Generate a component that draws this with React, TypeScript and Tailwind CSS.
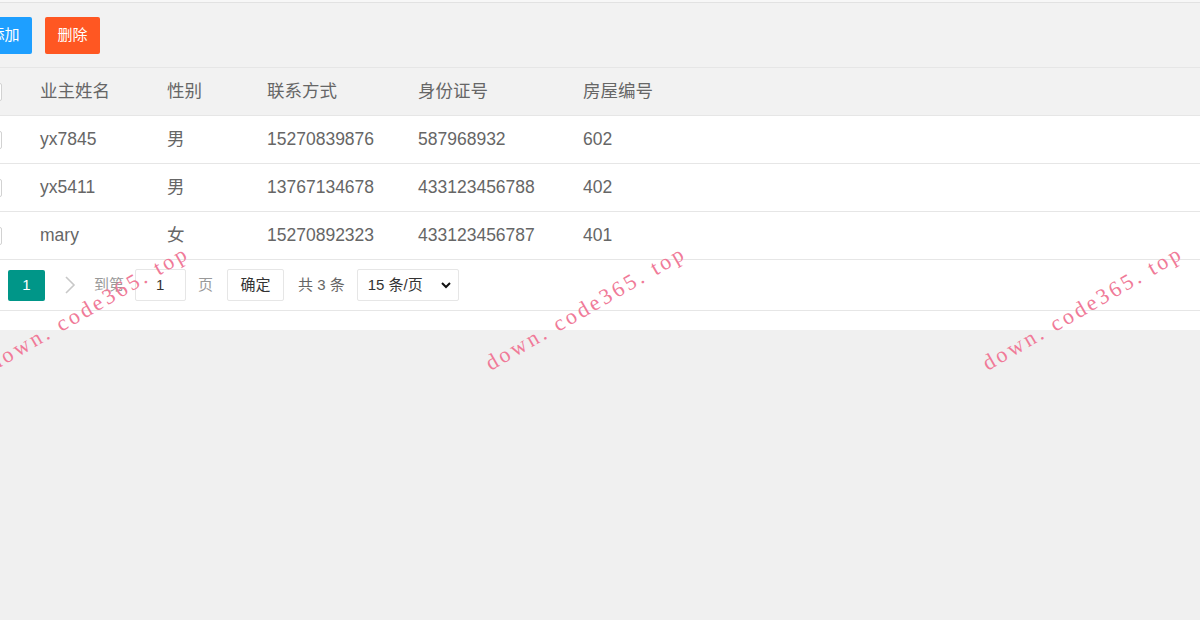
import React from "react";

interface Owner {
  name: string;
  gender: string;
  phone: string;
  idCard: string;
  house: string;
}

const owners: Owner[] = [
  { name: "yx7845", gender: "男", phone: "15270839876", idCard: "587968932", house: "602" },
  { name: "yx5411", gender: "男", phone: "13767134678", idCard: "433123456788", house: "402" },
  { name: "mary", gender: "女", phone: "15270892323", idCard: "433123456787", house: "401" },
];

const font = { fontFamily: '"Liberation Sans", "Noto Sans CJK SC", sans-serif' };

const Checkbox = () => (
  <div className="-ml-[17px] h-[18px] w-[19px] rounded-[2px] border border-[#d2d2d2] bg-white"></div>
);

const Row = ({ cells, head }: { cells: string[]; head?: boolean }) => (
  <div
    className={
      "flex h-[48px] items-center border-b border-[#e6e6e6] text-[17.5px] text-[#666] " +
      (head ? "bg-[#f2f2f2]" : "bg-white")
    }
  >
    <div className="w-[22px] shrink-0">
      <Checkbox />
    </div>
    <div className="w-[127px] shrink-0 pl-[18px]">{cells[0]}</div>
    <div className="w-[100px] shrink-0 pl-[18px]">{cells[1]}</div>
    <div className="w-[151px] shrink-0 pl-[18px]">{cells[2]}</div>
    <div className="w-[165px] shrink-0 pl-[18px]">{cells[3]}</div>
    <div className="flex-1 pl-[18px]">{cells[4]}</div>
  </div>
);

const Watermark = ({ left }: { left: number }) => (
  <div
    className="pointer-events-none absolute top-[348px] whitespace-nowrap text-[22px] tracking-[3px] text-[#f07a98]"
    style={{
      left,
      transform: "rotate(-30deg)",
      transformOrigin: "left center",
      fontFamily: '"Liberation Serif", serif',
    }}
  >
    down. code365. top
  </div>
);

export default function App() {
  return (
    <div className="relative h-[620px] w-[1200px] overflow-hidden bg-[#f0f0f0]" style={font}>
      <div className="h-[3px] border-b border-[#e2e2e2] bg-[#f7f7f7]"></div>

      <div className="bg-white pb-[19px]">
        {/* toolbar */}
        <div className="flex h-[64px] items-center gap-[13px] bg-[#f2f2f2]">
          <button className="-ml-[23px] h-[37px] w-[55px] rounded-[2px] bg-[#1e9fff] text-[15px] text-white">
            添加
          </button>
          <button className="h-[37px] w-[55px] rounded-[2px] bg-[#ff5722] text-[15px] text-white">
            删除
          </button>
        </div>

        <div className="border-t border-[#e6e6e6]">
          <Row head cells={["业主姓名", "性别", "联系方式", "身份证号", "房屋编号"]} />
          {owners.map((o) => (
            <Row key={o.name} cells={[o.name, o.gender, o.phone, o.idCard, o.house]} />
          ))}
        </div>

        {/* pagination */}
        <div className="flex h-[51px] items-center border-b border-[#e6e6e6] pl-[8px] text-[15px] text-[#666]">
          <div className="flex h-[31px] w-[37px] items-center justify-center rounded-[2px] bg-[#009688] text-white">
            1
          </div>
          <svg className="ml-[19px]" width="12" height="20" viewBox="0 0 12 20">
            <path d="M2 2 L10 10 L2 18" fill="none" stroke="#c8c8c8" strokeWidth="1.6" />
          </svg>
          <span className="ml-[18px] text-[#999]">到第</span>
          <div className="ml-[11px] flex h-[32px] w-[51px] items-center rounded-[2px] border border-[#e6e6e6] pl-[20px] text-[#333]">
            1
          </div>
          <span className="ml-[12px] text-[#999]">页</span>
          <div className="ml-[14px] flex h-[32px] w-[57px] items-center justify-center rounded-[2px] border border-[#e6e6e6] text-[#333]">
            确定
          </div>
          <span className="ml-[14px]">共 3 条</span>
          <div className="ml-[12px] flex h-[32px] w-[102px] items-center justify-between rounded-[2px] border border-[#e6e6e6] pl-[10px] pr-[5px] text-[#333]">
            <span>15 条/页</span>
            <svg width="14" height="10" viewBox="0 0 14 10">
              <path d="M3 3 L7 7 L11 3" fill="none" stroke="#111" strokeWidth="2" />
            </svg>
          </div>
        </div>
      </div>

      <Watermark left={-10} />
      <Watermark left={487} />
      <Watermark left={984} />
    </div>
  );
}
